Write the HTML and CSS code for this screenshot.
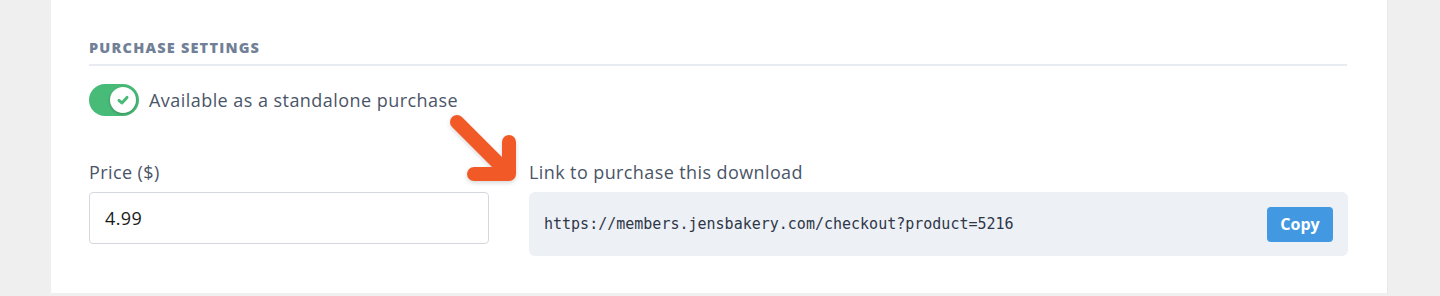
FILE: index.html
```html
<!DOCTYPE html>
<html lang="en">
<head>
  <meta charset="UTF-8">
  <title>Purchase settings</title>
  <link rel="stylesheet" href="styles.css">
</head>
<body>
  <div class="card">
    <h3 class="section-title">Purchase Settings</h3>

    <label class="toggle-row">
      <span class="toggle">
        <span class="knob">
          <svg width="16" height="16" viewBox="0 0 16 16">
            <path d="M4 8.4 L6.9 11 L12 5.4" fill="none" stroke="#48bb78" stroke-width="3" stroke-linecap="round" stroke-linejoin="round"/>
          </svg>
        </span>
      </span>
      <span class="toggle-label">Available as a standalone purchase</span>
    </label>

    <div class="fields">
      <div class="field">
        <div class="field-label">Price ($)</div>
        <input class="text-input" type="text" value="4.99">
      </div>
      <div class="field">
        <div class="field-label">Link to purchase this download</div>
        <div class="link-box">
          <code>https://members.jensbakery.com/checkout?product=5216</code>
          <button class="copy-btn">Copy</button>
        </div>
      </div>
    </div>

    <svg class="pointer" width="90" height="90" viewBox="0 0 90 90">
      <g fill="none" stroke="#f15a27" stroke-width="14" stroke-linecap="round" stroke-linejoin="round">
        <path d="M14 14 L62 62"/>
        <path d="M66 34 L66 66 L31 66"/>
      </g>
    </svg>
  </div>
</body>
</html>
```

FILE: styles.css
```css
body {
  margin: 0;
  background: #efefef;
  font-family: "Open Sans", Lato, sans-serif;
  color: #4a5568;
}

.card {
  position: relative;
  margin-left: 51px;
  width: 1337px;
  height: 293px;
  box-sizing: border-box;
  background: #fff;
  border-right: 1px solid #e3e7ee;
  padding: 38px 40px 0 38px;
}

.section-title {
  margin: 0;
  padding-bottom: 6px;
  border-bottom: 2px solid #e8ebf0;
  font-size: 14.5px;
  line-height: 20px;
  font-weight: 800;
  letter-spacing: 1.2px;
  text-transform: uppercase;
  color: #718096;
}

.toggle-row {
  display: flex;
  align-items: center;
  gap: 10px;
  margin-top: 18px;
}

.toggle {
  display: flex;
  align-items: center;
  justify-content: flex-end;
  width: 50px;
  height: 32px;
  padding: 0 3px;
  box-sizing: border-box;
  border-radius: 16px;
  background: #48bb78;
}

.knob {
  display: flex;
  align-items: center;
  justify-content: center;
  width: 26px;
  height: 26px;
  border-radius: 50%;
  background: #fff;
  box-shadow: 0 1px 3px rgba(0, 0, 0, 0.25);
}

.toggle-label {
  font-size: 18px;
  letter-spacing: 0.45px;
}

.fields {
  display: grid;
  grid-template-columns: 400px 819px;
  gap: 40px;
  margin-top: 44px;
}

.field-label {
  font-size: 18px;
  line-height: 24px;
  letter-spacing: 0.4px;
  margin-bottom: 8px;
}

.text-input {
  display: block;
  width: 100%;
  height: 52px;
  box-sizing: border-box;
  padding: 0 15px;
  border: 1px solid #d5d9df;
  border-radius: 4px;
  font-family: inherit;
  font-size: 18px;
  letter-spacing: 0.4px;
  color: #1a1a1a;
}

.link-box {
  display: flex;
  align-items: center;
  justify-content: space-between;
  height: 64px;
  box-sizing: border-box;
  padding: 0 15px;
  border-radius: 6px;
  background: #edf0f5;
}

.link-box code {
  font-family: "DejaVu Sans Mono", monospace;
  font-size: 15px;
  color: #2d3748;
}

.copy-btn {
  height: 35px;
  width: 66px;
  border: none;
  border-radius: 4px;
  background: #4299e1;
  color: #fff;
  font-family: inherit;
  font-size: 16px;
  font-weight: 700;
}

.pointer {
  position: absolute;
  left: 392px;
  top: 108px;
  filter: drop-shadow(0 2px 2px rgba(0, 0, 0, 0.15));
}
```
